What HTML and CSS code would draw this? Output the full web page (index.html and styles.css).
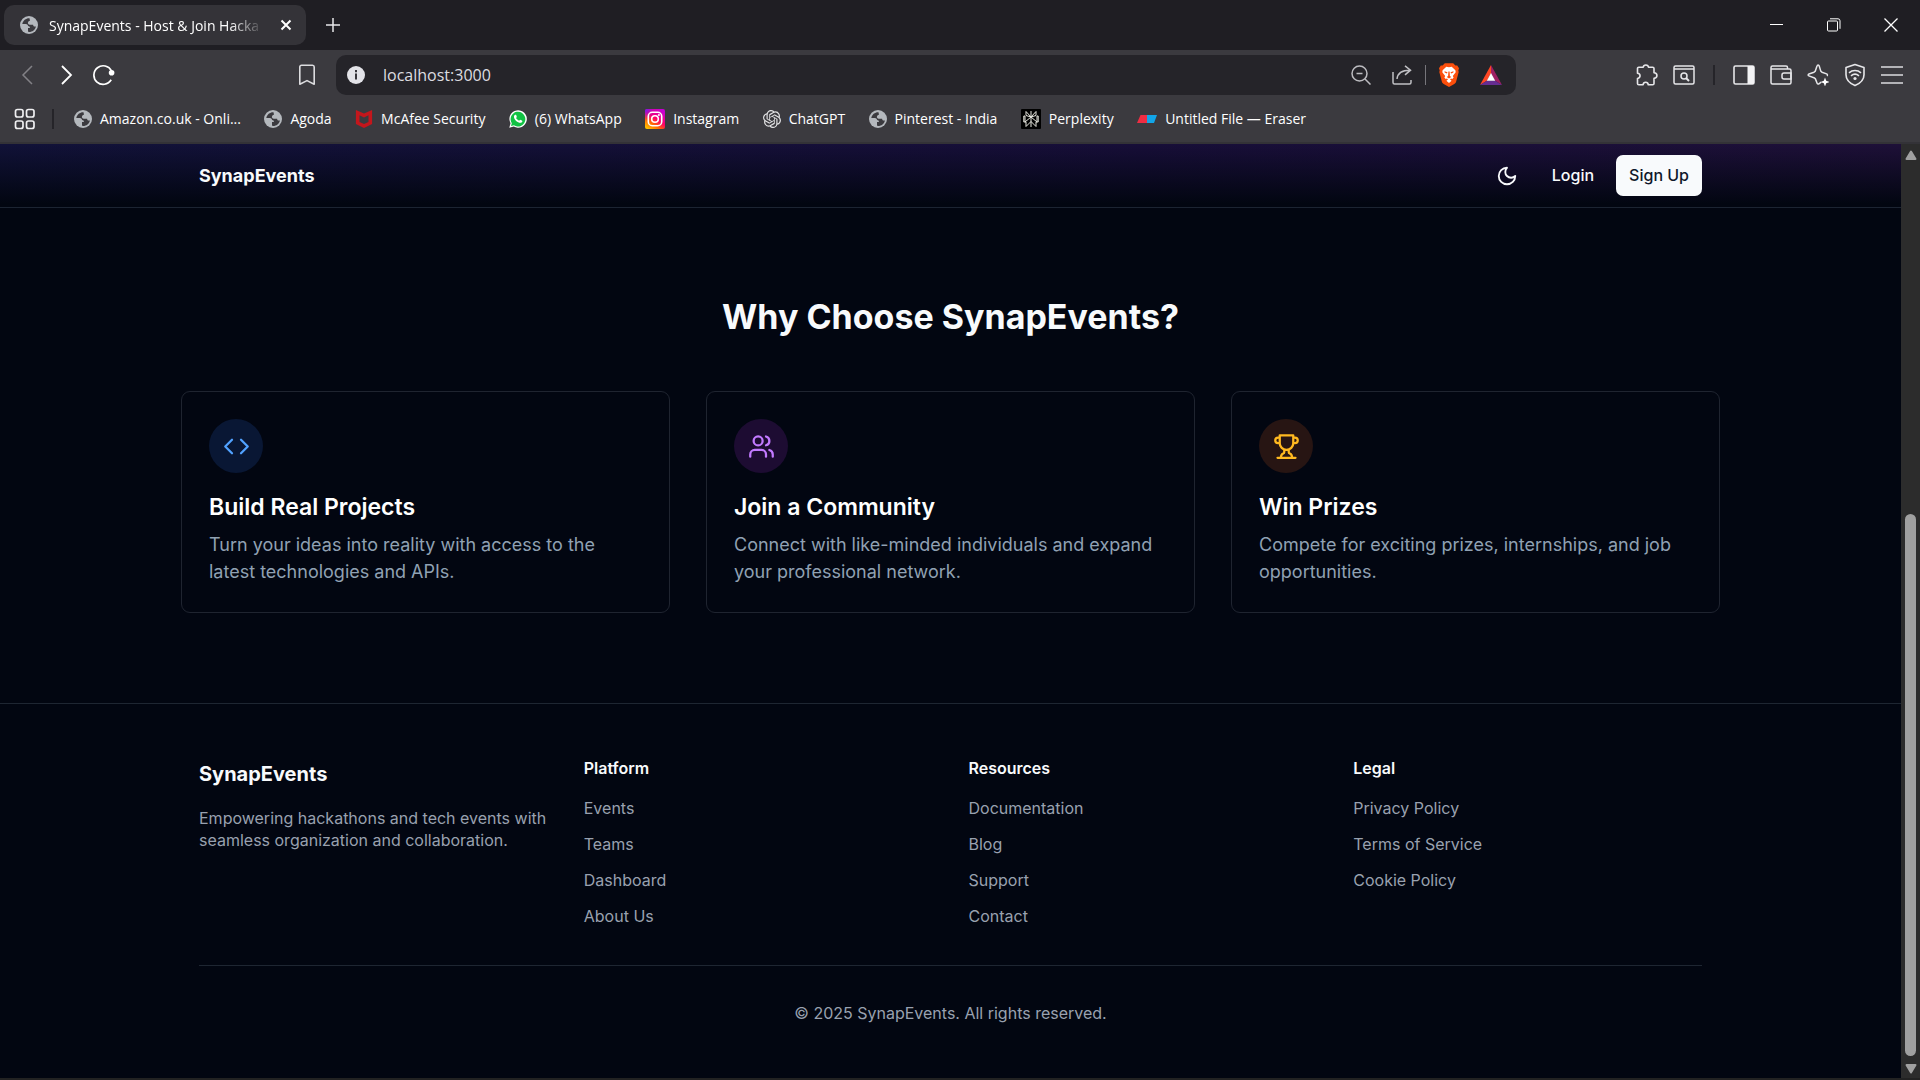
FILE: index.html
```html
<!DOCTYPE html>
<html lang="en">
<head>
<meta charset="utf-8">
<meta name="viewport" content="width=device-width, initial-scale=1">
<title>SynapEvents - Host &amp; Join Hackathons</title>
<link rel="stylesheet" href="styles.css">
</head>
<body>
<svg class="sprite" aria-hidden="true">
  <symbol id="globe" viewBox="0 0 18 18">
    <circle cx="9" cy="9" r="9" fill="#b4b8bd"/>
    <path d="M9.5 2.200c-3.400-.2-6.600 2.200-7.200 5.800l3.500.1c1.600.1 2.300.9 2.200 2 1.300.1 1.900.7 1.900 1.900H8v3.800c3.600.6 7.200-1.600 7.900-5.400l-1.300.1c-.9-.1-1.400-.7-1.500-1.800H9.700c-1.200-.1-1.900-.9-1.800-2 .1-1.200.8-1.800 1.900-1.800V3.700z" fill="#3b3a3f"/>
  </symbol>
</svg>

<header class="browser">
  <div class="tabstrip">
    <div class="tab">
      <svg class="favicon"><use href="#globe"/></svg>
      <span class="tab-title">SynapEvents - Host &amp; Join Hacka</span>
      <button class="icon-btn tab-close" aria-label="Close tab"><svg width="12" height="12" viewBox="0 0 12 12"><path d="M1.500 1.500l9 9M10.500 1.500l-9 9" stroke="#fff" stroke-width="2"/></svg></button>
    </div>
    <button class="icon-btn new-tab" aria-label="New tab"><svg width="14" height="14" viewBox="0 0 14 14"><path d="M7 0v14M0 7h14" stroke="#e8e8ea" stroke-width="1.500"/></svg></button>
    <div class="window-controls">
      <button class="icon-btn" aria-label="Minimize"><svg width="14" height="14" viewBox="0 0 14 14"><path d="M0 6.500h13" stroke="#fff"/></svg></button>
      <button class="icon-btn" aria-label="Restore"><svg width="14" height="14" viewBox="0 0 14 14" fill="none" stroke="#fff"><rect x=".5" y="3" width="10" height="10" rx="1"/><path d="M3 .8h8a2 2 0 0 1 2 2v8"/></svg></button>
      <button class="icon-btn" aria-label="Close"><svg width="14" height="14" viewBox="0 0 14 14"><path d="M.5.5l13 13M13.500.5l-13 13" stroke="#fff" stroke-width="1.300"/></svg></button>
    </div>
  </div>

  <div class="toolbar">
    <div class="nav-buttons">
      <button class="icon-btn" aria-label="Back"><svg width="12" height="20" viewBox="0 0 12 20" fill="none" stroke="#828186" stroke-width="1.500"><path d="M11 1L2 10l9 9"/></svg></button>
      <button class="icon-btn" aria-label="Forward"><svg width="12" height="20" viewBox="0 0 12 20" fill="none" stroke="#fff" stroke-width="1.800"><path d="M1 1l9 9-9 9"/></svg></button>
      <button class="icon-btn" aria-label="Reload"><svg width="22" height="22" viewBox="0 0 22 22"><path d="M18.500 6.900A9.300 9.300 0 1 0 18.200 15.800" fill="none" stroke="#fff" stroke-width="1.700"/><circle cx="18.600" cy="8.800" r="2.800" fill="#fff"/></svg></button>
    </div>
    <button class="icon-btn save-page" aria-label="Bookmark this page"><svg width="18" height="22" viewBox="0 0 18 22"><path d="M3.500 1.200h11a1.700 1.700 0 0 1 1.700 1.700v17.300L9 16.600l-7.200 3.600V2.900a1.700 1.700 0 0 1 1.700-1.700z" fill="none" stroke="#dcdcdf" stroke-width="1.600" stroke-linejoin="round"/></svg></button>
    <div class="address-bar">
      <svg width="18" height="18" viewBox="0 0 18 18"><circle cx="9" cy="9" r="9" fill="#e3e3e8"/><path d="M9 4v2.200M9 7.500v6" stroke="#36353a" stroke-width="2"/></svg>
      <input class="address" type="text" value="localhost:3000" aria-label="Address">
      <div class="address-actions">
        <button class="icon-btn" aria-label="Zoom"><svg width="20" height="20" viewBox="0 0 20 20" fill="none" stroke="#bcbcc0" stroke-width="1.500"><circle cx="8.500" cy="8.500" r="7.500"/><path d="M14 14l5.500 5.500M5.500 8.500h6"/></svg></button>
        <button class="icon-btn" aria-label="Share"><svg width="20" height="20" viewBox="0 0 20 20" fill="none" stroke="#c0c0c4" stroke-width="1.500"><path d="M1 7v10.500A1.500 1.500 0 0 0 2.500 19h15a1.500 1.500 0 0 0 1.500-1.500V15M5 14c.5-5.500 4-8.800 13-8.800M13 .8l5.500 4.400-5.500 4.600"/></svg></button>
        <span class="address-divider"></span>
        <button class="icon-btn" aria-label="Brave Shields"><svg width="20" height="24" viewBox="0 0 20 24"><path d="M5.800.3h8.400l2.200 2.300 1.800-.2 1.800 2.900-.7 2.100.4 1.500-2.600 9.800c-.3 1.100-1 1.700-1.800 2.300L10 24l-5.300-3C3.900 20.400 3.200 19.800 2.900 18.700L.3 8.900l.4-1.500L0 5.300l1.800-2.900 1.800.2z" fill="#fb4f0c"/><path d="M10 4.300l2.700-.6 3.700 3.500.3 2-2.900 3.800.8 1.600-1.300 1.400-1.300-.6-1 1 1.600 1.400-2.600 2.200-2.600-2.200L9 16.400l-1-1-1.300.6-1.300-1.400.8-1.600-2.900-3.800.3-2 3.700-3.500z" fill="#fff"/><path d="M5.500 8.300l3 1-.6 1.200-2.300-1zM14.500 8.300l-3 1 .6 1.200 2.300-1zM9.400 8.500h1.200l.3 4.500 1.400.9L10 15.500l-2.300-1.600 1.400-.9z" fill="#fb4f0c"/></svg></button>
        <button class="icon-btn" aria-label="Brave Rewards"><svg width="22" height="20" viewBox="0 0 22 20"><path d="M11 0v8.200L7.200 15.400 0 20z" fill="#ff4724"/><path d="M11 0l11 20-7.200-4.600L11 8.200z" fill="#9e1f63"/><path d="M0 20l7.200-4.600h7.600L22 20z" fill="#662d91"/><path d="M11 8l4.200 7.700H6.800z" fill="#fff"/></svg></button>
      </div>
    </div>
    <div class="extensions">
      <button class="icon-btn" aria-label="Extensions"><svg width="22" height="22" viewBox="0 0 22 22" fill="none" stroke="#e6e6e9" stroke-width="1.600" stroke-linejoin="round"><path d="M1.500 4.500a1.300 1.300 0 0 1 1.300-1.300h4.400c.3-3 5-3 5.300 0h4.200a1.300 1.300 0 0 1 1.300 1.300v4.300c3.900.2 3.900 5.400 0 5.600v5.100a1.300 1.300 0 0 1-1.300 1.300h-4.400c-.4-3.400-4.900-3.400-5.200 0H2.800a1.300 1.300 0 0 1-1.300-1.300v-5c3.400-.5 3.400-4.900 0-5.200z"/></svg></button>
      <button class="icon-btn" aria-label="Search page"><svg width="22" height="22" viewBox="0 0 22 22" fill="none" stroke="#e6e6e9" stroke-width="1.500"><rect x="1" y="2" width="20" height="18" rx="1.500"/><path d="M1 5h20"/><circle cx="11" cy="12" r="3"/><path d="M13 14l3 3" stroke-width="2"/></svg></button>
      <span class="bar-divider"></span>
      <button class="icon-btn" aria-label="Side panel"><svg width="22" height="22" viewBox="0 0 22 22"><rect x="1" y="2" width="20" height="18" rx="1.500" fill="none" stroke="#e6e6e9" stroke-width="1.600"/><path d="M14.500 2H20a1 1 0 0 1 1 1v16a1 1 0 0 1-1 1h-5.500z" fill="#f3f3f5"/></svg></button>
      <button class="icon-btn" aria-label="Wallet"><svg width="22" height="22" viewBox="0 0 22 22" fill="none" stroke="#e6e6e9" stroke-width="1.500"><path d="M17.500 5V3.500A1.500 1.500 0 0 0 16 2H2.500A1.500 1.500 0 0 0 1 3.500v15A1.500 1.500 0 0 0 2.500 20h17a1.500 1.500 0 0 0 1.500-1.500v-12A1.500 1.500 0 0 0 19.500 5h-18"/><path d="M21 9h-7a2 2 0 0 0-2 2v2a2 2 0 0 0 2 2h7z"/></svg></button>
      <button class="icon-btn" aria-label="Leo AI"><svg width="22" height="22" viewBox="0 0 22 22" fill="none" stroke="#e6e6e9" stroke-width="1.500" stroke-linejoin="round"><path d="M14.200 18.200l-2 1.500c-.8.600-1.800.4-2.100-.5l-1.700-4.300-.9-.9-5.600-2.100c-1-.4-1-1.500 0-1.900L7 8.300l1.300-1.200L10 2c.4-1.300 1.800-1.300 2.200 0l1.600 5.100L15 8.300l4.600 1.600c1 .4 1.100 1.300.3 1.900"/><path d="M18 13.500l1.200 3.300 3.300 1.200-3.300 1.200L18 22.500l-1.200-3.300L13.500 18l3.300-1.200z" fill="#fff" stroke="none"/></svg></button>
      <button class="icon-btn" aria-label="VPN"><svg width="22" height="24" viewBox="0 0 22 24" fill="none" stroke="#e6e6e9" stroke-width="1.600"><path d="M11 1.500l9 3v7.300c0 5-3.500 8.500-9 10.800-5.500-2.300-9-5.800-9-10.800V4.500z" stroke-linejoin="round"/><path d="M5 9.800c3.500-3 8.500-3 12 0M7 12.800c2.400-2 5.600-2 8 0"/><circle cx="11" cy="15.500" r="1.600" fill="#e6e6e9" stroke="none"/></svg></button>
      <button class="icon-btn" aria-label="Menu"><svg width="22" height="18" viewBox="0 0 22 18"><path d="M0 1h22M0 9h22M0 17h22" stroke="#dcdcdf" stroke-width="1.600"/></svg></button>
    </div>
  </div>

  <nav class="bookmarks" aria-label="Bookmarks">
    <button class="icon-btn" aria-label="Tab groups"><svg width="22" height="22" viewBox="0 0 22 22" fill="none" stroke="#f0f0f2" stroke-width="1.700"><rect x="1.500" y="1.500" width="7.500" height="7.500" rx="2"/><rect x="12.500" y="1.500" width="7.500" height="7.500" rx="2"/><rect x="1.500" y="13" width="7.500" height="7.500" rx="2"/><rect x="12.500" y="13" width="7.500" height="7.500" rx="2"/></svg></button>
    <span class="bar-divider"></span>
    <div class="bookmark-list">
      <a class="bookmark" href="#"><svg class="favicon"><use href="#globe"/></svg>Amazon.co.uk - Onli...</a>
      <a class="bookmark" href="#"><svg class="favicon"><use href="#globe"/></svg>Agoda</a>
      <a class="bookmark" href="#"><svg class="favicon" viewBox="0 0 18 20"><path d="M0 0l9 4 9-4v15.500L9 20l-9-4.500zM4 5.800v7.500l5 2.300 5-2.300V5.800L9 8.300z" fill="#c4161c"/></svg>McAfee Security</a>
      <a class="bookmark" href="#"><svg class="favicon" viewBox="0 0 20 20"><path d="M.3 19.800l1.400-5A9.700 9.700 0 1 1 5.300 18.400z" fill="#fff"/><path d="M2.200 17.900l.9-3.300A8.200 8.200 0 1 1 5.500 17z" fill="#12c244"/><path d="M6.900 5.300c-.4 0-1.400.8-1.400 2.200 0 3.300 4.300 6.800 7.100 6.800 1.300 0 2.300-.9 2.300-2.100 0-.4-2.200-1.500-2.500-1.400-.4.100-.8 1.100-1.200 1.100-.7 0-3.300-2.100-3.300-2.900 0-.3.800-.8.800-1.200 0-.5-.7-2.200-1-2.400z" fill="#fff"/></svg>(6) WhatsApp</a>
      <a class="bookmark" href="#"><svg class="favicon favicon-lg" viewBox="0 0 20 20"><defs><linearGradient id="insta" x1="0" y1="1" x2=".7" y2="0"><stop offset="0" stop-color="#ffd600"/><stop offset=".35" stop-color="#ff6a00"/><stop offset=".6" stop-color="#ff0069"/><stop offset="1" stop-color="#c800d2"/></linearGradient><radialGradient id="insta-blue" cx="0" cy="0" r=".6"><stop offset="0" stop-color="#5a22ff"/><stop offset="1" stop-color="#d300c5" stop-opacity="0"/></radialGradient></defs><rect width="20" height="20" rx="2" fill="url(#insta)"/><rect width="20" height="20" rx="2" fill="url(#insta-blue)"/><g fill="none" stroke="#fff" stroke-width="1.600"><rect x="3.300" y="3.300" width="13.400" height="13.400" rx="4"/><circle cx="10" cy="10" r="3.300"/></g><circle cx="13.900" cy="6.100" r="1" fill="#fff"/></svg>Instagram</a>
      <a class="bookmark" href="#"><svg class="favicon" viewBox="0 0 24 24" fill="#e2e2e4"><path d="M22.2819 9.8211a5.9847 5.9847 0 0 0-.5157-4.9108 6.0462 6.0462 0 0 0-6.5098-2.9A6.0651 6.0651 0 0 0 4.9807 4.1818a5.9847 5.9847 0 0 0-3.9977 2.9 6.0462 6.0462 0 0 0 .7427 7.0966 5.98 5.98 0 0 0 .511 4.9107 6.051 6.051 0 0 0 6.5146 2.9001A5.9847 5.9847 0 0 0 13.2599 24a6.0557 6.0557 0 0 0 5.7718-4.2058 5.9894 5.9894 0 0 0 3.9977-2.9001 6.0557 6.0557 0 0 0-.7475-7.0729zm-9.022 12.6081a4.4755 4.4755 0 0 1-2.8764-1.0408l.1419-.0804 4.7783-2.7582a.7948.7948 0 0 0 .3927-.6813v-6.7369l2.02 1.1686a.071.071 0 0 1 .038.052v5.5826a4.504 4.504 0 0 1-4.4945 4.4944zm-9.6607-4.1254a4.4708 4.4708 0 0 1-.5346-3.0137l.142.0852 4.783 2.7582a.7712.7712 0 0 0 .7806 0l5.8428-3.3685v2.3324a.0804.0804 0 0 1-.0332.0615L9.74 19.9502a4.4992 4.4992 0 0 1-6.1408-1.6464zM2.3408 7.8956a4.485 4.485 0 0 1 2.3655-1.9728V11.6a.7664.7664 0 0 0 .3879.6765l5.8144 3.3543-2.0201 1.1685a.0757.0757 0 0 1-.071 0l-4.8303-2.7865A4.504 4.504 0 0 1 2.3408 7.872zm16.5963 3.8558L13.1038 8.364 15.1192 7.2a.0757.0757 0 0 1 .071 0l4.8303 2.7913a4.4944 4.4944 0 0 1-.6765 8.1042v-5.6772a.79.79 0 0 0-.407-.667zm2.0107-3.0231l-.142-.0852-4.7735-2.7818a.7759.7759 0 0 0-.7854 0L9.409 9.2297V6.8974a.0662.0662 0 0 1 .0284-.0615l4.8303-2.7866a4.4992 4.4992 0 0 1 6.6802 4.66zM8.3065 12.863l-2.02-1.1638a.0804.0804 0 0 1-.038-.0567V6.0742a4.4992 4.4992 0 0 1 7.3757-3.4537l-.142.0805L8.704 5.459a.7948.7948 0 0 0-.3927.6813zm1.0976-2.3654l2.602-1.4998 2.6069 1.4998v2.9994l-2.5974 1.4997-2.6067-1.4997Z"/></svg>ChatGPT</a>
      <a class="bookmark" href="#"><svg class="favicon"><use href="#globe"/></svg>Pinterest - India</a>
      <a class="bookmark" href="#"><svg class="favicon favicon-lg" viewBox="0 0 20 20"><rect width="20" height="20" rx="1" fill="#000"/><path d="M10 2v16M5 2.500v4L10 8l5-1.500v-4L10 8 5 2.500M10 8l-6 5V7H2.800v6H5v4.500l5-5 5 5V13h2.200V7H16v6z" fill="none" stroke="#e8e8e0" stroke-width="1"/></svg>Perplexity</a>
      <a class="bookmark" href="#"><svg class="favicon favicon-lg" viewBox="0 0 20 20"><path d="M3.500 6H10v8H0z" fill="#ef2d43"/><path d="M10 6h10l-3 8h-7z" fill="#12a5e8"/></svg>Untitled File — Eraser</a>
    </div>
  </nav>
</header>

<div class="viewport">
  <div class="page">
    <header class="site-header">
      <div class="container header-row">
        <a class="brand" href="#">SynapEvents</a>
        <div class="header-actions">
          <button class="theme-toggle" aria-label="Toggle theme"><svg width="22" height="22" viewBox="0 0 24 24" fill="none" stroke="currentColor" stroke-width="2" stroke-linecap="round" stroke-linejoin="round"><path d="M12 3a6 6 0 0 0 9 9 9 9 0 1 1-9-9Z"/></svg></button>
          <button class="btn">Login</button>
          <button class="btn btn-primary">Sign Up</button>
        </div>
      </div>
    </header>

    <main class="features">
      <h2 class="features-title">Why Choose SynapEvents?</h2>
      <div class="cards">
        <article class="card">
          <div class="badge badge-blue"><svg class="badge-icon" viewBox="0 0 24 24"><path d="M16 18l6-6-6-6M8 6l-6 6 6 6"/></svg></div>
          <h3 class="card-title">Build Real Projects</h3>
          <p class="card-text">Turn your ideas into reality with access to the latest technologies and APIs.</p>
        </article>
        <article class="card">
          <div class="badge badge-purple"><svg class="badge-icon" viewBox="0 0 24 24"><path d="M16 21v-2a4 4 0 0 0-4-4H6a4 4 0 0 0-4 4v2"/><circle cx="9" cy="7" r="4"/><path d="M22 21v-2a4 4 0 0 0-3-3.870M16 3.130a4 4 0 0 1 0 7.750"/></svg></div>
          <h3 class="card-title">Join a Community</h3>
          <p class="card-text">Connect with like-minded individuals and expand your professional network.</p>
        </article>
        <article class="card">
          <div class="badge badge-amber"><svg class="badge-icon" viewBox="0 0 24 24"><path d="M6 9H4.500a2.500 2.500 0 0 1 0-5H6M18 9h1.500a2.500 2.500 0 0 0 0-5H18M4 22h16M10 14.660V17c0 .55-.47.98-.97 1.210C7.850 18.750 7 20.240 7 22M14 14.660V17c0 .55.47.98.97 1.210C16.150 18.750 17 20.240 17 22M18 2H6v7a6 6 0 0 0 12 0V2Z"/></svg></div>
          <h3 class="card-title">Win Prizes</h3>
          <p class="card-text">Compete for exciting prizes, internships, and job opportunities.</p>
        </article>
      </div>
    </main>

    <footer class="site-footer">
      <div class="container">
        <div class="footer-grid">
          <section>
            <h3 class="footer-brand">SynapEvents</h3>
            <p class="footer-text">Empowering hackathons and tech events with seamless organization and collaboration.</p>
          </section>
          <nav aria-label="Platform">
            <h4 class="footer-heading">Platform</h4>
            <ul class="footer-links">
              <li><a href="#">Events</a></li>
              <li><a href="#">Teams</a></li>
              <li><a href="#">Dashboard</a></li>
              <li><a href="#">About Us</a></li>
            </ul>
          </nav>
          <nav aria-label="Resources">
            <h4 class="footer-heading">Resources</h4>
            <ul class="footer-links">
              <li><a href="#">Documentation</a></li>
              <li><a href="#">Blog</a></li>
              <li><a href="#">Support</a></li>
              <li><a href="#">Contact</a></li>
            </ul>
          </nav>
          <nav aria-label="Legal">
            <h4 class="footer-heading">Legal</h4>
            <ul class="footer-links">
              <li><a href="#">Privacy Policy</a></li>
              <li><a href="#">Terms of Service</a></li>
              <li><a href="#">Cookie Policy</a></li>
            </ul>
          </nav>
        </div>
        <p class="copyright">© 2025 SynapEvents. All rights reserved.</p>
      </div>
    </footer>
  </div>

  <div class="scrollbar" aria-hidden="true">
    <svg width="14" height="12" viewBox="0 0 14 12"><path d="M7 2.500l4.500 7.500h-9z" fill="#a0a0a0" stroke="#a0a0a0" stroke-width="2" stroke-linejoin="round"/></svg>
    <div class="track"><div class="thumb"></div></div>
    <svg width="14" height="12" viewBox="0 0 14 12"><path d="M7 9.500L2.500 2h9z" fill="#a0a0a0" stroke="#a0a0a0" stroke-width="2" stroke-linejoin="round"/></svg>
  </div>
</div>
</body>
</html>
```
FILE: styles.css
```css
*, *::before, *::after { box-sizing: border-box; }

body {
  margin: 0;
  min-height: 100vh;
  display: flex;
  flex-direction: column;
  background: #020611;
  color: #f8fafc;
  font-family: Inter, "Liberation Sans", sans-serif;
  font-size: 18px;
}

h2, h3, h4, p, ul { margin: 0; padding: 0; }
ul { list-style: none; }
a { color: inherit; text-decoration: none; }
button { font: inherit; color: inherit; border: 0; background: none; padding: 0; }
svg { display: block; flex: none; }
.sprite { position: absolute; width: 0; height: 0; }

/* Browser window */
.browser {
  height: 144px;
  flex: none;
  background: #3b3a3f;
  border-bottom: 2px solid #333237;
  font-family: "Open Sans", "Noto Sans", sans-serif;
  font-size: 14px;
  color: #fff;
}
.icon-btn { display: flex; align-items: center; justify-content: center; flex: none; }
.favicon { width: 18px; height: 18px; }
.favicon-lg { width: 20px; height: 20px; }

.tabstrip {
  display: flex;
  align-items: center;
  height: 50px;
  padding: 0 22px 0 4px;
  background: #1f1e23;
}
.tab {
  display: flex;
  align-items: center;
  width: 302px;
  height: 40px;
  padding: 0 14px 0 16px;
  border-radius: 10px;
  background: #343338;
}
.tab-title {
  flex: 1;
  margin: 0 16px 0 11px;
  white-space: nowrap;
  mask-image: linear-gradient(to right, #000 84%, transparent);
}
.new-tab { margin-left: 20px; }
.window-controls { display: flex; gap: 43px; margin-left: auto; }

.toolbar {
  display: flex;
  align-items: center;
  height: 50px;
  padding: 0 17px 0 21px;
}
.nav-buttons { display: flex; align-items: center; gap: 28px; }
.nav-buttons .icon-btn:last-child { margin-left: -8px; }
.save-page { margin-left: auto; }
.address-bar {
  display: flex;
  align-items: center;
  width: 1180px;
  height: 40px;
  margin: 0 120px 0 20px;
  padding: 0 14px 0 11px;
  border-radius: 10px;
  background: #252429;
}
.address {
  flex: 1;
  min-width: 0;
  height: 24px;
  margin-left: 18px;
  padding: 0;
  border: 0;
  background: none;
  color: #dddde0;
  font: inherit;
  font-size: 16px;
}
.address-actions { display: flex; align-items: center; gap: 21px; }
.address-divider { width: 1px; height: 20px; margin: 0 -8px; background: #77767b; }
.extensions { display: flex; align-items: center; gap: 15px; }
.extensions .bar-divider { margin: 0 3px; }
.bar-divider { width: 2px; height: 20px; flex: none; background: #252429; }

.bookmarks {
  display: flex;
  align-items: center;
  gap: 16px;
  height: 38px;
  padding: 0 14px;
}
.bookmark-list { display: flex; justify-content: space-between; width: 1232px; margin-left: 4px; }
.bookmark { display: flex; align-items: center; gap: 8px; white-space: nowrap; line-height: 18px; }

/* Page area and its scrollbar */
.viewport { display: flex; flex: 1; border-bottom: 2px solid #222; }
.page { flex: 1; min-width: 0; }
.scrollbar {
  display: flex;
  flex-direction: column;
  align-items: center;
  justify-content: space-between;
  width: 19px;
  padding: 5px 0 3px;
  background: #2c2c2c;
}
.track { display: flex; align-items: flex-end; flex: 1; padding: 7px 0; }
.thumb { width: 11px; height: 61%; border-radius: 6px; background: #a0a0a0; }

.container { max-width: 1575px; margin: 0 auto; padding: 0 36px; }

.site-header {
  border-bottom: 1px solid #1c2432;
  background:
    linear-gradient(to bottom, transparent, #020611 95%),
    linear-gradient(to right, #111238, #170e38 60%, #1e1038);
}
.header-row { display: flex; align-items: center; justify-content: space-between; height: 63px; }
.brand { font-weight: 700; }
.header-actions { display: flex; align-items: center; gap: 9px; }
.theme-toggle { display: flex; align-items: center; justify-content: center; width: 45px; height: 45px; }
.btn {
  height: 41px;
  padding: 0 13px 2px;
  border-radius: 7px;
  font-size: 16px;
  font-weight: 500;
}
.btn-primary { background: #f8fafc; color: #0f172a; }

.features { max-width: 1575px; margin: 0 auto; padding: 89px 18px 90px; }
.features-title {
  margin-bottom: 55px;
  font-size: 34px;
  line-height: 39px;
  font-weight: 700;
  text-align: center;
}
.cards { display: grid; grid-template-columns: repeat(3, 1fr); gap: 36px; }
.card { padding: 27px; border: 1px solid #1f2430; border-radius: 9px; }
.badge {
  display: flex;
  align-items: center;
  justify-content: center;
  width: 54px;
  height: 54px;
  margin-bottom: 18px;
  border-radius: 50%;
}
.badge-icon {
  width: 27px;
  height: 27px;
  fill: none;
  stroke: currentColor;
  stroke-width: 2;
  stroke-linecap: round;
  stroke-linejoin: round;
}
.badge-blue { background: #091734; color: #51a2ff; }
.badge-purple { background: #1d0c32; color: #c27aff; }
.badge-amber { background: #271513; color: #ffb920; }
.card-title { margin-bottom: 8px; font-size: 23px; line-height: 32px; font-weight: 600; color: #fff; }
.card-text { line-height: 27px; color: #90a1b3; }

.site-footer { padding: 54px 0; border-top: 1px solid #1e2632; font-size: 16px; line-height: 22px; }
.footer-grid { display: grid; grid-template-columns: repeat(4, 1fr); gap: 36px; margin-bottom: 35px; }
.footer-brand { margin-bottom: 17px; font-size: 20px; line-height: 32px; font-weight: 700; }
.footer-text { color: #99a1af; }
.footer-heading { margin-bottom: 17px; font-size: 16px; line-height: 20px; font-weight: 600; }
.footer-links { display: grid; gap: 9px; line-height: 27px; color: #99a1af; }
.copyright { padding-top: 36px; border-top: 1px solid #1e2632; color: #99a1af; text-align: center; }
```
